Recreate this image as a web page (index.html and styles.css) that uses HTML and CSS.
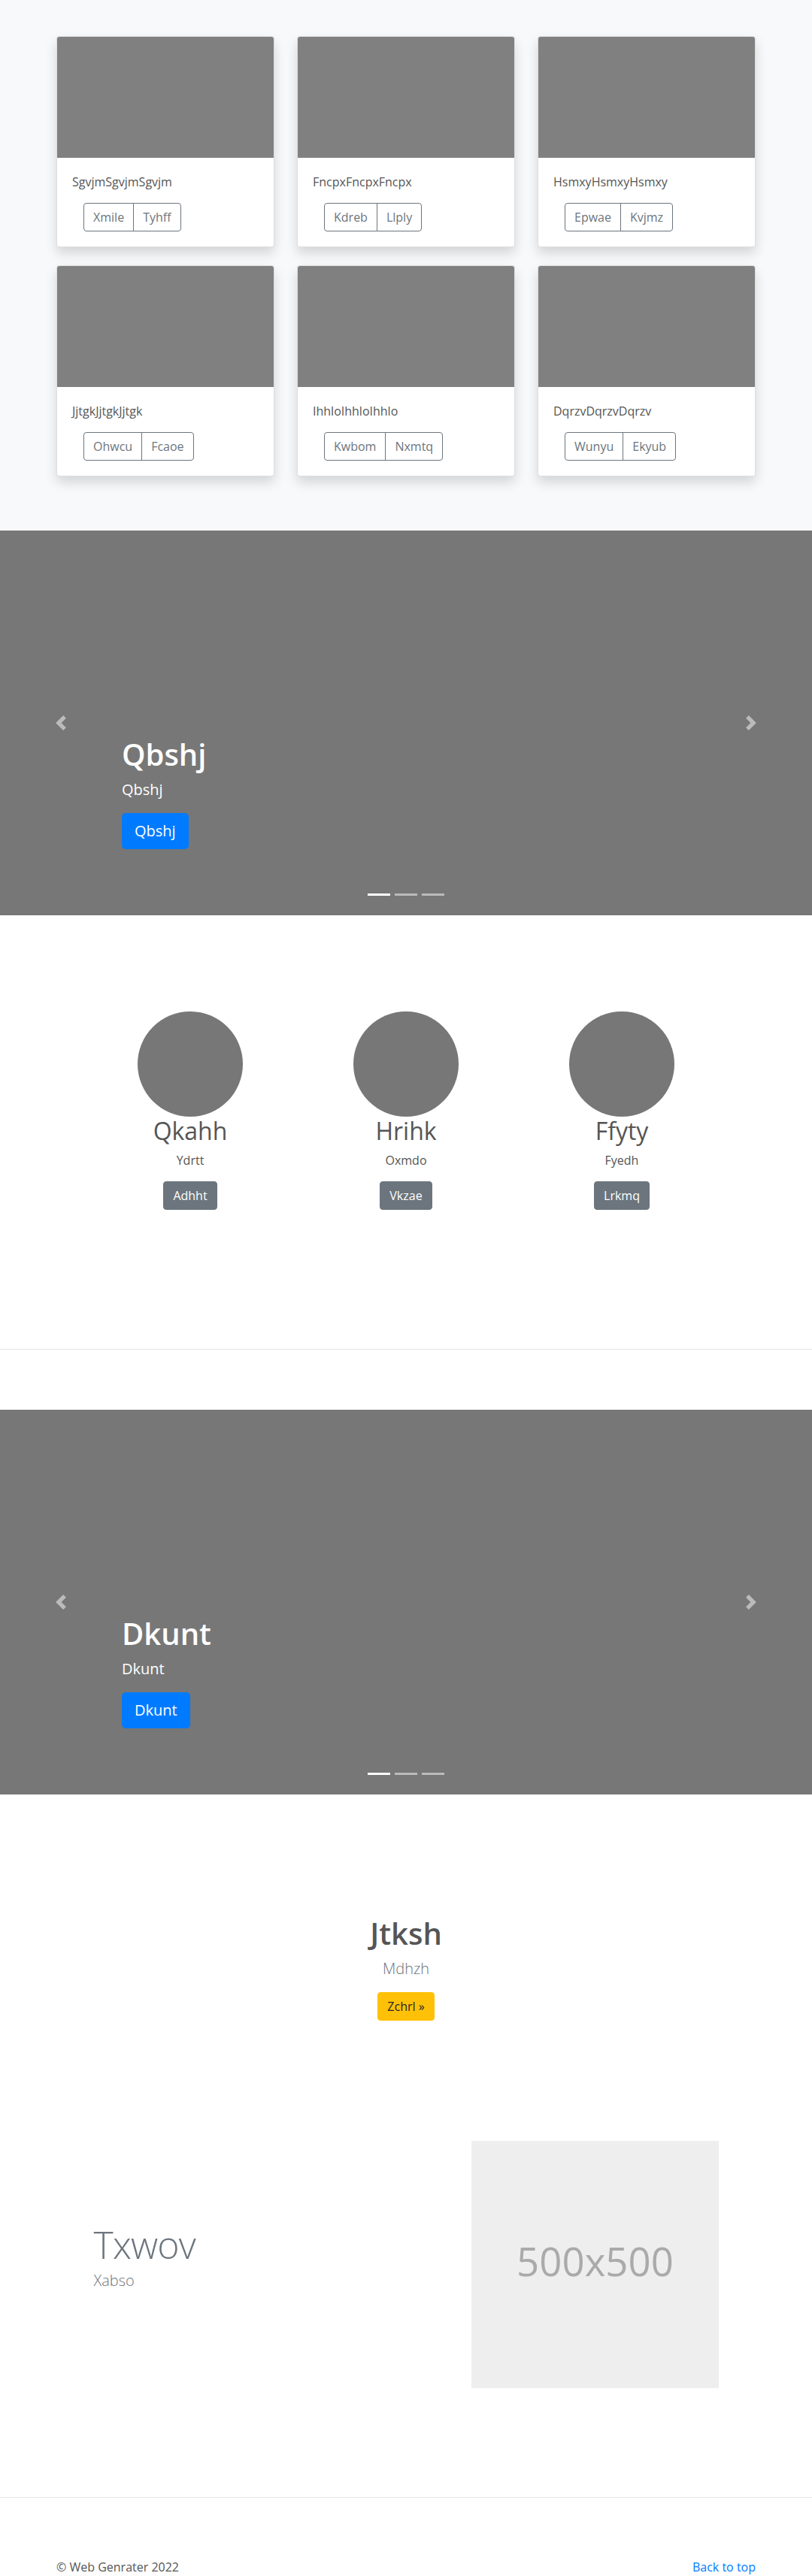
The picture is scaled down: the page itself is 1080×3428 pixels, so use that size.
FILE: index.html
```html
<!DOCTYPE html>
<html lang="en">
<head>
<meta charset="utf-8">
<title>Web Genrater</title>
<link rel="stylesheet" href="styles.css">
</head>
<body>
<section class="album">
  <div class="album-grid">
    <div class="card">
      <div class="card-img"></div>
      <div class="card-body">
        <p class="card-text">SgvjmSgvjmSgvjm</p>
        <div class="btn-group"><a class="btn btn-outline">Xmile</a><a class="btn btn-outline">Tyhff</a></div>
      </div>
    </div>
    <div class="card">
      <div class="card-img"></div>
      <div class="card-body">
        <p class="card-text">FncpxFncpxFncpx</p>
        <div class="btn-group"><a class="btn btn-outline">Kdreb</a><a class="btn btn-outline">Llply</a></div>
      </div>
    </div>
    <div class="card">
      <div class="card-img"></div>
      <div class="card-body">
        <p class="card-text">HsmxyHsmxyHsmxy</p>
        <div class="btn-group"><a class="btn btn-outline">Epwae</a><a class="btn btn-outline">Kvjmz</a></div>
      </div>
    </div>
    <div class="card">
      <div class="card-img"></div>
      <div class="card-body">
        <p class="card-text">JjtgkJjtgkJjtgk</p>
        <div class="btn-group"><a class="btn btn-outline">Ohwcu</a><a class="btn btn-outline">Fcaoe</a></div>
      </div>
    </div>
    <div class="card">
      <div class="card-img"></div>
      <div class="card-body">
        <p class="card-text">IhhloIhhloIhhlo</p>
        <div class="btn-group"><a class="btn btn-outline">Kwbom</a><a class="btn btn-outline">Nxmtq</a></div>
      </div>
    </div>
    <div class="card">
      <div class="card-img"></div>
      <div class="card-body">
        <p class="card-text">DqrzvDqrzvDqrzv</p>
        <div class="btn-group"><a class="btn btn-outline">Wunyu</a><a class="btn btn-outline">Ekyub</a></div>
      </div>
    </div>
  </div>
</section>

<section class="carousel">
  <ol class="indicators"><li class="active"></li><li></li><li></li></ol>
  <div class="carousel-caption">
    <h1>Qbshj</h1>
    <p class="caption-lead">Qbshj</p>
    <div class="btn-row"><a class="btn btn-lg btn-primary">Qbshj</a></div>
  </div>
  <a class="ctrl prev"><svg viewBox="0 0 8 8" width="20" height="20"><path fill="#fff" d="M5.25 0l-4 4 4 4 1.5-1.5L4.25 4l2.5-2.5L5.25 0z"/></svg></a>
  <a class="ctrl next"><svg viewBox="0 0 8 8" width="20" height="20"><path fill="#fff" d="M2.75 0l-1.5 1.5L3.75 4l-2.5 2.5L2.75 8l4-4-4-4z"/></svg></a>
</section>

<section class="team">
  <div class="team-grid">
    <div class="member">
      <div class="avatar"></div>
      <h2>Qkahh</h2>
      <p>Ydrtt</p>
      <div class="btn-row"><a class="btn btn-secondary">Adhht</a></div>
    </div>
    <div class="member">
      <div class="avatar"></div>
      <h2>Hrihk</h2>
      <p>Oxmdo</p>
      <div class="btn-row"><a class="btn btn-secondary">Vkzae</a></div>
    </div>
    <div class="member">
      <div class="avatar"></div>
      <h2>Ffyty</h2>
      <p>Fyedh</p>
      <div class="btn-row"><a class="btn btn-secondary">Lrkmq</a></div>
    </div>
  </div>
</section>

<hr class="divider">

<section class="carousel">
  <ol class="indicators"><li class="active"></li><li></li><li></li></ol>
  <div class="carousel-caption">
    <h1>Dkunt</h1>
    <p class="caption-lead">Dkunt</p>
    <div class="btn-row"><a class="btn btn-lg btn-primary">Dkunt</a></div>
  </div>
  <a class="ctrl prev"><svg viewBox="0 0 8 8" width="20" height="20"><path fill="#fff" d="M5.25 0l-4 4 4 4 1.5-1.5L4.25 4l2.5-2.5L5.25 0z"/></svg></a>
  <a class="ctrl next"><svg viewBox="0 0 8 8" width="20" height="20"><path fill="#fff" d="M2.75 0l-1.5 1.5L3.75 4l-2.5 2.5L2.75 8l4-4-4-4z"/></svg></a>
</section>

<section class="hero">
  <h1>Jtksh</h1>
  <p class="lead muted">Mdhzh</p>
  <div class="btn-row center"><a class="btn btn-warning">Zchrl &raquo;</a></div>
</section>

<section class="featurette">
  <div class="feat-text">
    <h2 class="feat-heading">Txwov</h2>
    <p class="lead muted">Xabso</p>
  </div>
  <div class="feat-img">
    <svg class="placeholder" width="329" height="329" viewBox="0 0 329 329"><rect width="100%" height="100%" fill="#eee"/><text x="50%" y="50%" dy=".3em" text-anchor="middle">500x500</text></svg>
  </div>
</section>

<hr class="divider footer-divider">

<footer class="footer">
  <p>&copy; Web Genrater 2022</p>
  <p><a class="top-link" href="#">Back to top</a></p>
</footer>
</body>
</html>
```

FILE: styles.css
```css
* { box-sizing: border-box; }
html, body { margin: 0; padding: 0; }
body {
  font-family: "Open Sans", "Noto Sans", "Liberation Sans", sans-serif;
  font-size: 16px;
  line-height: 1.5;
  color: #555;
  background: #fff;
}
p { margin: 0 0 16px; }
a { text-decoration: none; }

/* Buttons */
.btn {
  display: inline-block;
  font-size: 16px;
  line-height: 24px;
  padding: 6px 12px;
  border: 1px solid transparent;
  border-radius: 4px;
  white-space: nowrap;
}
.btn-lg { font-size: 20px; line-height: 30px; padding: 8px 16px; border-radius: 4.8px; }
.btn-primary { background: #007bff; border-color: #007bff; color: #fff; }
.btn-secondary { background: #6c757d; border-color: #6c757d; color: #fff; }
.btn-warning { background: #ffc107; border-color: #ffc107; color: #212529; }
.btn-outline { border-color: #6c757d; color: #6c757d; background: transparent; }
.btn-row { display: flex; }
.btn-row.center { justify-content: center; }

/* Album */
.album { background: #f8f9fa; padding: 48px 0 72px; }
.album-grid {
  width: 930px;
  margin: 0 auto;
  display: grid;
  grid-template-columns: repeat(3, 290px);
  column-gap: 30px;
  row-gap: 24px;
}
.card {
  background: #fff;
  border: 1px solid rgba(0,0,0,.125);
  border-radius: 4px;
  box-shadow: 0 8px 16px rgba(0,0,0,.15);
  overflow: hidden;
}
.card-img { height: 161px; background: #808080; }
.card-body { padding: 20px; }
.card-text { color: #555; }
.btn-group { display: inline-flex; margin-left: 15px; }
.btn-group .btn:first-child { border-top-right-radius: 0; border-bottom-right-radius: 0; }
.btn-group .btn + .btn { margin-left: -1px; border-top-left-radius: 0; border-bottom-left-radius: 0; }

/* Carousel */
.carousel { position: relative; height: 512px; background: #777; overflow: hidden; }
.carousel-caption {
  position: absolute;
  left: 15%;
  right: 15%;
  bottom: 52px;
  padding: 20px 0;
  color: #fff;
  z-index: 2;
}
.carousel-caption h1 { font-size: 40px; font-weight: 600; line-height: 48px; margin: 0 0 8px; }
.caption-lead { font-size: 20px; line-height: 30px; margin: 0 0 16px; }
.carousel-caption .btn-row { margin-bottom: 16px; }
.ctrl {
  position: absolute;
  top: 0;
  bottom: 0;
  width: 15%;
  display: flex;
  align-items: center;
  justify-content: center;
  opacity: .5;
}
.ctrl.prev { left: 0; }
.ctrl.next { right: 0; }
.ctrl svg { display: block; width: 20px; height: 20px; }
.indicators {
  position: absolute;
  left: 0;
  right: 0;
  bottom: 0;
  margin: 0 0 16px;
  padding: 0;
  list-style: none;
  display: flex;
  justify-content: center;
  z-index: 3;
}
.indicators li {
  box-sizing: content-box;
  width: 30px;
  height: 3px;
  margin: 0 3px;
  background: #fff;
  background-clip: padding-box;
  border-top: 10px solid transparent;
  border-bottom: 10px solid transparent;
  opacity: .5;
}
.indicators li.active { opacity: 1; }

/* Team */
.team { padding: 128px 0 65px; }
.team-grid {
  width: 861px;
  margin: 0 auto;
  display: grid;
  grid-template-columns: repeat(3, 1fr);
}
.member {
  display: flex;
  flex-direction: column;
  align-items: center;
  text-align: center;
  padding: 0 15px;
  margin-bottom: 24px;
}
.avatar { width: 140px; height: 140px; border-radius: 50%; background: #777; }
.member h2 { font-size: 32px; font-weight: 400; line-height: 38px; margin: 0 0 8px; color: #555; }
.member .btn-row { margin-bottom: 16px; }

.divider { border: 0; border-top: 1px solid rgba(0,0,0,.1); margin: 80px 0; height: 0; }

/* Hero */
.hero { text-align: center; padding-top: 161px; }
.hero h1 { font-size: 40px; font-weight: 600; line-height: 48px; margin: 0 0 8px; color: #555; }
.lead { font-size: 20px; line-height: 30px; font-weight: 300; }
.muted { color: #6c757d; }

/* Featurette */
.featurette {
  width: 861px;
  margin: 160px auto 0;
  display: grid;
  grid-template-columns: 7fr 5fr;
  align-items: center;
}
.feat-text { padding: 0 15px; }
.feat-heading {
  font-size: 50px;
  font-weight: 300;
  line-height: 1;
  letter-spacing: -0.8px;
  margin: 0 0 8px;
  color: #6c757d;
}
.feat-img { padding: 0 15px; }
.placeholder { display: block; }
.placeholder text { font-family: "Open Sans", "Noto Sans", sans-serif; font-size: 52.8px; fill: #aaa; }

.footer-divider { margin: 145px 0 80px; }

/* Footer */
.footer {
  width: 930px;
  margin: 0 auto;
  display: flex;
  justify-content: space-between;
  height: 24px;
}
.footer p { margin: 0; }
.top-link { color: #007bff; }
```
